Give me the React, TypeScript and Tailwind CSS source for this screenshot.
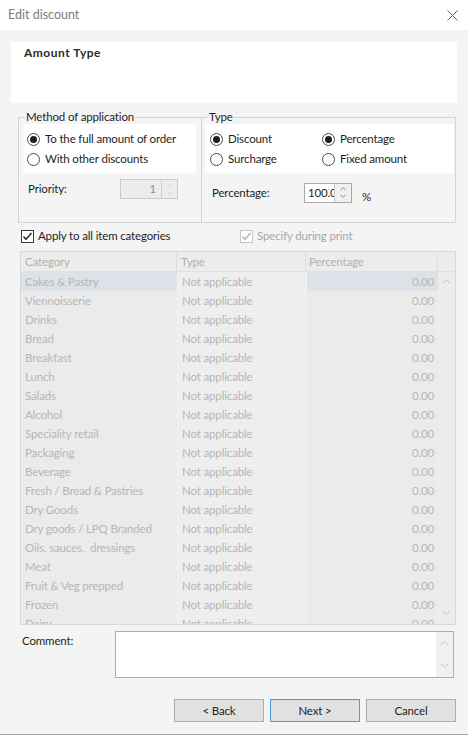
import React from "react";

const rows = [
  "Cakes & Pastry",
  "Viennoisserie",
  "Drinks",
  "Bread",
  "Breakfast",
  "Lunch",
  "Salads",
  "Alcohol",
  "Speciality retail",
  "Packaging",
  "Beverage",
  "Fresh / Bread & Pastries",
  "Dry Goods",
  "Dry goods / LPQ Branded",
  "Oils, sauces,  dressings",
  "Meat",
  "Fruit & Veg prepped",
  "Frozen",
  "Dairy",
];

function Chevron({ up, color = "#c4c4c4", w = 9, h = 5 }: { up?: boolean; color?: string; w?: number; h?: number }) {
  return (
    <svg width={w} height={h} viewBox="0 0 9 5" className="block">
      {up ? (
        <polyline points="0.5,4.5 4.5,0.5 8.5,4.5" fill="none" stroke={color} strokeWidth="1" />
      ) : (
        <polyline points="0.5,0.5 4.5,4.5 8.5,0.5" fill="none" stroke={color} strokeWidth="1" />
      )}
    </svg>
  );
}

function Radio({ checked, label }: { checked?: boolean; label: string }) {
  return (
    <div className="flex items-center h-[20px] gap-[5px]">
      <span className="w-[13px] h-[13px] rounded-full border border-[#4a4a4a] bg-white flex items-center justify-center shrink-0">
        {checked && <span className="w-[7px] h-[7px] rounded-full bg-[#1f1f1f]" />}
      </span>
      <span className="whitespace-nowrap">{label}</span>
    </div>
  );
}

function Check({ label, disabled }: { label: string; disabled?: boolean }) {
  const c = disabled ? "#b8b8b8" : "#333333";
  return (
    <div className={`flex items-center h-[20px] gap-[4px] ${disabled ? "text-[#a8a8a8]" : "text-[#1e1e1e]"}`}>
      <span
        className={`w-[13px] h-[13px] border bg-white flex items-center justify-center shrink-0 ${
          disabled ? "border-[#c6c6c6]" : "border-[#3a3a3a]"
        }`}
      >
        <svg width="11" height="11" viewBox="0 0 11 11">
          <polyline points="1.5,5.5 4,8.2 9.5,2" fill="none" stroke={c} strokeWidth="1.6" />
        </svg>
      </span>
      <span className="whitespace-nowrap">{label}</span>
    </div>
  );
}

function Spin({ value, disabled, w, bw, align }: { value: string; disabled?: boolean; w: string; bw: string; align: string }) {
  return (
    <div
      className={`flex h-[20px] border ${w} ${
        disabled ? "border-[#cacaca] bg-[#ececec]" : "border-[#a9a9a9] bg-white"
      }`}
    >
      <div className={`flex-1 overflow-hidden flex items-center ${align} ${disabled ? "text-[#8c8c8c]" : "text-[#1e1e1e]"} leading-none`}>
        <span className="whitespace-nowrap">{value}</span>
      </div>
      <div
        className={`${bw} border-l flex flex-col items-center justify-center gap-[3px] ${
          disabled ? "border-[#d2d2d2] bg-[#ececec]" : "border-[#c8c8c8] bg-[#f0f0f0]"
        }`}
      >
        <Chevron up w={6} h={4} color={disabled ? "#c8c8c8" : "#606060"} />
        <Chevron w={6} h={4} color={disabled ? "#c8c8c8" : "#606060"} />
      </div>
    </div>
  );
}

export default function App() {
  return (
    <div className="w-[468px] h-[735px] box-border bg-[#f4f4f4] border-b border-[#a3a3a3] flex flex-col font-['Lato',sans-serif] text-[11.5px] tracking-[-0.15px] text-[#1e1e1e] overflow-hidden">
      {/* Title bar */}
      <div className="h-[30px] bg-white flex items-center justify-between pl-[8px] pr-[10px] shrink-0">
        <span className="text-[#7c7c7c] text-[12.5px] tracking-normal">Edit discount</span>
        <svg width="11" height="11" viewBox="0 0 11 11">
          <line x1="0.5" y1="0.5" x2="10.5" y2="10.5" stroke="#606060" strokeWidth="1" />
          <line x1="10.5" y1="0.5" x2="0.5" y2="10.5" stroke="#606060" strokeWidth="1" />
        </svg>
      </div>

      {/* Header panel */}
      <div className="mt-[12px] mx-[11px] h-[61px] bg-white pl-[13px] pt-[2px] shrink-0">
        <span className="font-bold text-[12px] text-[#2a2a2a] tracking-[0.5px]">Amount Type</span>
      </div>

      {/* Group boxes */}
      <div className="flex mt-[6px] ml-[18px] shrink-0">
        <fieldset className="w-[184px] h-[114px] border border-[#d3d3d3] m-0 p-0">
          <legend className="ml-[6px] px-[1px] leading-[16px]">Method of application</legend>
          <div className="mx-[4px] mr-[5px] mt-[-1px] h-[49px] bg-white pl-[4px] pt-[5px]">
            <Radio checked label="To the full amount of order" />
            <Radio label="With other discounts" />
          </div>
          <div className="flex items-center mt-[6px] pl-[9px]">
            <span className="w-[92px]">Priority:</span>
            <Spin value="1" disabled w="w-[58px]" bw="w-[16px]" align="justify-end pr-[5px]" />
          </div>
        </fieldset>
        <fieldset className="w-[254px] h-[114px] border border-l-0 border-[#d3d3d3] m-0 p-0">
          <legend className="ml-[6px] px-[1px] leading-[16px]">Type</legend>
          <div className="ml-[3px] mr-[1px] mt-[-1px] h-[49px] bg-white pl-[5px] pt-[5px] grid grid-cols-[112px_1fr] auto-rows-[20px]">
            <Radio checked label="Discount" />
            <Radio checked label="Percentage" />
            <Radio label="Surcharge" />
            <Radio label="Fixed amount" />
          </div>
          <div className="flex items-center mt-[7px] pl-[10px]">
            <span className="w-[92px]">Percentage:</span>
            <Spin value="100.00" w="w-[48px]" bw="w-[17px]" align="justify-start pl-[3px]" />
            <span className="ml-[10px] mt-[8px]">%</span>
          </div>
        </fieldset>
      </div>

      {/* Checkboxes */}
      <div className="flex mt-[3px] ml-[21px] shrink-0">
        <div className="w-[219px]">
          <Check label="Apply to all item categories" />
        </div>
        <Check disabled label="Specify during print" />
      </div>

      {/* Table */}
      <div className="mt-[5px] ml-[20px] w-[436px] h-[374px] border border-[#d8d8d8] bg-[#ebebeb] flex flex-col overflow-hidden shrink-0 text-[#b6b6b6]">
        <div className="grid grid-cols-[156px_129px_132px_17px] h-[20px] border-b border-[#e0e0e0] bg-[#ececec] text-[#b0b0b0] shrink-0">
          <div className="pl-[4px] flex items-center border-r border-[#dedede]">Category</div>
          <div className="pl-[4px] flex items-center border-r border-[#dedede]">Type</div>
          <div className="pl-[3px] flex items-center border-r border-[#dedede]">Percentage</div>
          <div />
        </div>
        <div className="flex flex-1 overflow-hidden">
          <div className="w-[417px] overflow-hidden">
            {rows.map((r, i) => (
              <div key={r} className="grid grid-cols-[156px_129px_132px] h-[19px]">
                <div className={`pl-[4px] flex items-center whitespace-pre ${i === 0 ? "bg-[#dde1e8]" : "bg-[#ebebeb]"}`}>{r}</div>
                <div className="pl-[4px] flex items-center border-l border-[#f2f2f2] bg-[#eeeeee] whitespace-nowrap">Not applicable</div>
                <div className={`pr-[4px] flex items-center justify-end border-l border-[#f2f2f2] ${i === 0 ? "bg-[#dde1e8]" : "bg-[#ebebeb]"}`}>0.00</div>
              </div>
            ))}
          </div>
          <div className="w-[17px] bg-[#ececec] flex flex-col items-center justify-between pt-[7px] pb-[9px]">
            <Chevron up />
            <Chevron />
          </div>
        </div>
      </div>

      {/* Comment */}
      <div className="flex mt-[6px] ml-[22px] shrink-0">
        <span className="w-[93px] pt-[1px]">Comment:</span>
        <div className="w-[339px] h-[47px] border border-[#acacac] bg-white flex">
          <div className="flex-1" />
          <div className="w-[17px] bg-[#f0f0f0] flex flex-col items-center justify-between pt-[9px] pb-[9px]">
            <Chevron up />
            <Chevron />
          </div>
        </div>
      </div>

      {/* Buttons */}
      <div className="flex justify-end gap-[6px] mt-[21px] pr-[12px] shrink-0">
        <button className="w-[90px] h-[23px] border border-[#adadad] bg-[#e1e1e1] text-[#1e1e1e] flex items-center justify-center">&lt; Back</button>
        <button className="w-[90px] h-[23px] border border-[#4d9be6] bg-[#e1e1e1] text-[#1e1e1e] flex items-center justify-center">Next &gt;</button>
        <button className="w-[90px] h-[23px] border border-[#adadad] bg-[#e1e1e1] text-[#1e1e1e] flex items-center justify-center">Cancel</button>
      </div>
    </div>
  );
}
